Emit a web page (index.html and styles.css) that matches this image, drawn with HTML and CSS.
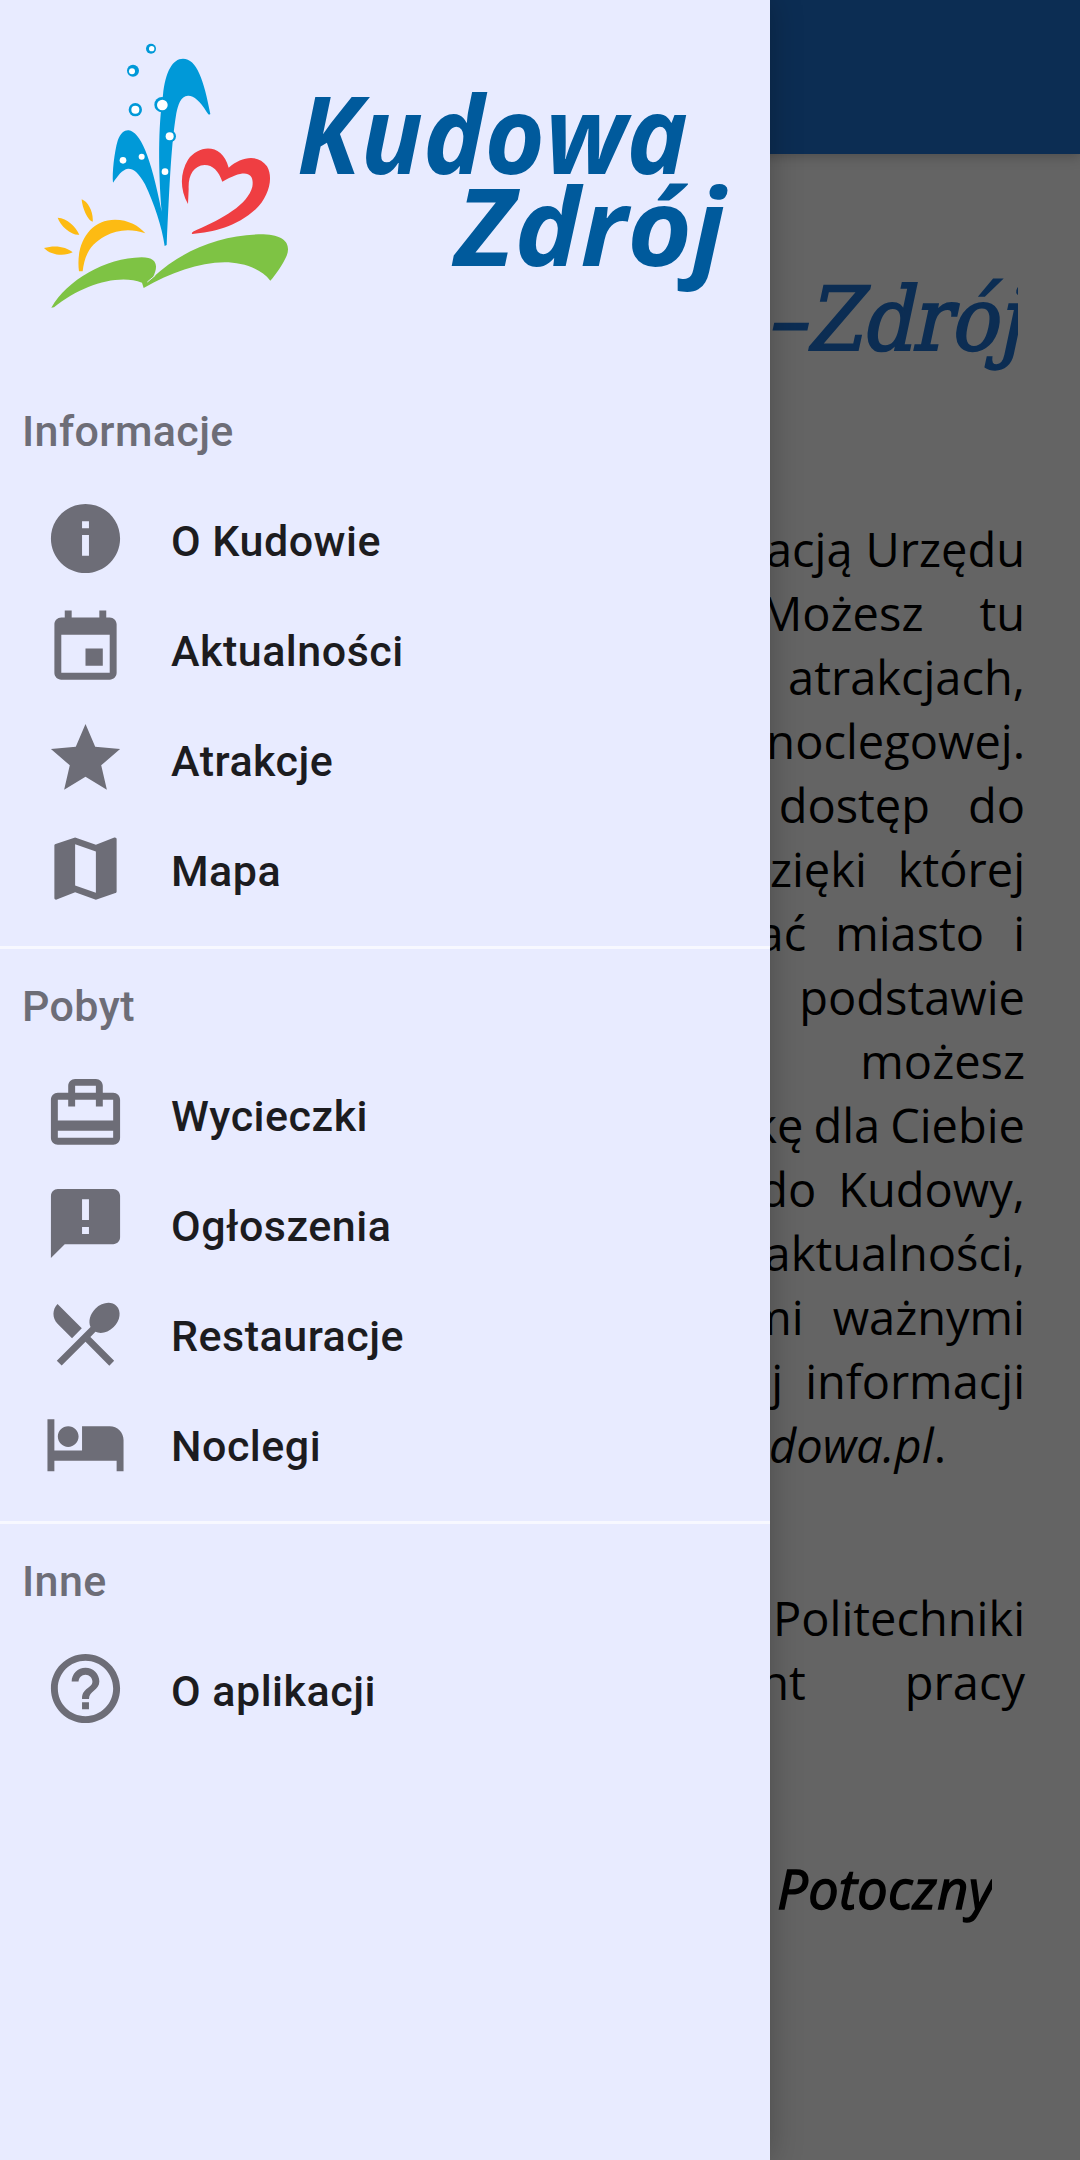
FILE: index.html
```html
<!DOCTYPE html>
<html lang="pl">
<head>
<meta charset="utf-8">
<title>Kudowa-Zdrój</title>
<link rel="stylesheet" href="styles.css">
</head>
<body>
<div class="screen">
  <main class="page">
    <header class="app-bar"></header>
    <h1 class="title"><span class="title-text">Kudowa–Zdrój</span></h1>
    <div class="text">
      <div class="line g11"><span>aplikacją</span><span>Urzędu</span></div>
      <div class="line g56"><span>Możesz</span><span>tu</span></div>
      <div class="line"><span>atrakcjach,</span></div>
      <div class="line"><span>noclegowej.</span></div>
      <div class="line g36"><span>dostęp</span><span>do</span></div>
      <div class="line g29"><span>dzięki</span><span>której</span></div>
      <div class="line g28"><span>poznać</span><span>miasto</span><span>i</span></div>
      <div class="line"><span>podstawie</span></div>
      <div class="line"><span>możesz</span></div>
      <div class="line g8"><span>wycieczkę</span><span>dla</span><span>Ciebie</span></div>
      <div class="line g20"><span>do</span><span>Kudowy,</span></div>
      <div class="line"><span>aktualności,</span></div>
      <div class="line g28"><span>innymi</span><span>ważnymi</span></div>
      <div class="line g20"><span>więcej</span><span>informacji</span></div>
      <div class="line last"><span><em>kudowa.pl</em>.</span></div>
    </div>
    <div class="text second">
      <div class="line"><span>Politechniki</span></div>
      <div class="line g98"><span>dokument</span><span>pracy</span></div>
    </div>
    <div class="author"><span class="author-name">Potoczny</span></div>
  </main>
  <div class="scrim"></div>
  <nav class="drawer">
    <svg class="logo" width="770" height="376" viewBox="0 0 770 376">
      <g transform="translate(30 30) scale(.33333)">
        <path fill="#0099d8" d="M404 648C396 590 372 520 345 463C325 425 308 415 294 416C276 419 263 438 249 458C246 430 253 365 263 332C272 308 284 300 296 301C330 306 362 375 395 545C385 420 384 290 399 195C406 125 428 86 459 86C500 86 522 150 541 252C537 256 535 253 530 246C511 213 490 196 474 197C452 198 444 225 439 250C424 340 419 455 410 645Z"/>
        <g fill="#0099d8">
          <circle cx="363" cy="56" r="15"/><circle cx="309" cy="122" r="18"/><circle cx="316" cy="239" r="20"/><circle cx="396" cy="224" r="23"/><circle cx="420" cy="319" r="18"/>
        </g>
        <g fill="#fff">
          <circle cx="365" cy="56" r="8"/><circle cx="306" cy="124" r="9"/><circle cx="316" cy="239" r="12"/><circle cx="397" cy="225" r="16"/><circle cx="419" cy="319" r="12"/><circle cx="279" cy="391" r="10"/><circle cx="335" cy="380" r="9"/><circle cx="405" cy="425" r="10"/>
        </g>
        <path fill="#ef3e42" d="M474 522C448 475 451 427 474 389C508 342 577 340 596 413C635 379 684 371 711 409C732 445 715 501 677 538C620 590 550 607 487 612C482 608 490 604 501 599C577 567 654 523 667 470C674 427 646 414 577 455C566 423 548 405 524 405C490 407 474 437 476 477Z"/>
        <g fill="#fdbb13">
          <path d="M147 724C136 640 180 569 255 569C295 569 328 588 346 610C302 594 261 599 226 618C181 642 164 674 158 724Z"/>
          <path d="M155 508C175 515 191 548 188 575C174 572 157 535 155 508ZM83 563C112 565 137 590 148 614C125 617 91 588 83 563ZM42 654C75 644 110 650 128 667C104 680 61 676 42 654Z"/>
        </g>
        <path fill="#7ec344" d="M64 833C112 751 224 684 335 682C385 682 384 711 369 742C460 657 580 613 700 613C770 615 782 647 770 677C757 705 739 732 721 752C691 713 633 697 584 697C506 698 421 728 341 774L336 758C266 730 154 765 72 832Z"/>
        <path fill="none" stroke="#e8ebff" stroke-width="3" d="M352 756L376 736"/>
      </g>
      <g class="logo-text">
        <text x="297" y="174" textLength="391" lengthAdjust="spacingAndGlyphs">Kudowa</text>
        <text x="455" y="266" textLength="270" lengthAdjust="spacingAndGlyphs">Zdrój</text>
      </g>
    </svg>
    <h2 class="heading">Informacje</h2>
    <a class="item"><svg class="icon" viewBox="0 0 24 24"><path d="M12 2C6.48 2 2 6.48 2 12s4.48 10 10 10 10-4.48 10-10S17.52 2 12 2zm1 15h-2v-6h2v6zm0-8h-2V7h2v2z"/></svg><span>O Kudowie</span></a>
    <a class="item"><svg class="icon" viewBox="0 0 24 24"><path d="M17 12h-5v5h5v-5zM16 1v2H8V1H6v2H5c-1.11 0-1.99.9-1.99 2L3 19c0 1.1.89 2 2 2h14c1.1 0 2-.9 2-2V5c0-1.1-.9-2-2-2h-1V1h-2zm3 18H5V8h14v11z"/></svg><span>Aktualności</span></a>
    <a class="item"><svg class="icon" viewBox="0 0 24 24"><path d="M12 17.27L18.18 21l-1.64-7.03L22 9.24l-7.19-.61L12 2 9.19 8.63 2 9.24l5.46 4.73L5.82 21z"/></svg><span>Atrakcje</span></a>
    <a class="item"><svg class="icon" viewBox="0 0 24 24"><path d="M20.5 3l-.16.03L15 5.1 9 3 3.36 4.9c-.21.07-.36.25-.36.48V20.5c0 .28.22.5.5.5l.16-.03L9 18.9l6 2.1 5.64-1.9c.21-.07.36-.25.36-.48V3.5c0-.28-.22-.5-.5-.5zM15 19l-6-2.11V5l6 2.11V19z"/></svg><span>Mapa</span></a>
    <hr class="divider">
    <h2 class="heading">Pobyt</h2>
    <a class="item"><svg class="icon" viewBox="0 0 24 24"><path d="M20 6h-3V4c0-1.11-.89-2-2-2H9c-1.11 0-2 .89-2 2v2H4c-1.11 0-2 .89-2 2v11c0 1.11.89 2 2 2h16c1.11 0 2-.89 2-2V8c0-1.11-.89-2-2-2zM9 4h6v2H9V4zm11 15H4v-2h16v2zm0-5H4V8h3v2h2V8h6v2h2V8h3v6z"/></svg><span>Wycieczki</span></a>
    <a class="item"><svg class="icon" viewBox="0 0 24 24"><path d="M20 2H4c-1.1 0-1.99.9-1.99 2L2 22l4-4h14c1.1 0 2-.9 2-2V4c0-1.1-.9-2-2-2zm-7 9h-2V5h2v6zm0 4h-2v-2h2v2z"/></svg><span>Ogłoszenia</span></a>
    <a class="item"><svg class="icon" viewBox="0 0 24 24"><path d="M8.1 13.34l2.83-2.83L3.91 3.5c-1.56 1.56-1.56 4.09 0 5.66l4.19 4.18zm6.78-1.81c1.53.71 3.68.21 5.27-1.38 1.91-1.91 2.28-4.65.81-6.12-1.46-1.46-4.2-1.1-6.12.81-1.59 1.59-2.09 3.74-1.38 5.27L3.7 19.87l1.41 1.41L12 14.41l6.88 6.88 1.41-1.41L13.41 13l1.47-1.47z"/></svg><span>Restauracje</span></a>
    <a class="item"><svg class="icon" viewBox="0 0 24 24"><path d="M7 13c1.66 0 3-1.34 3-3S8.66 7 7 7s-3 1.34-3 3 1.34 3 3 3zm12-6h-8v7H3V5H1v15h2v-3h18v3h2v-9c0-2.21-1.79-4-4-4z"/></svg><span>Noclegi</span></a>
    <hr class="divider">
    <h2 class="heading">Inne</h2>
    <a class="item"><svg class="icon" viewBox="0 0 24 24"><path d="M11 18h2v-2h-2v2zm1-16C6.48 2 2 6.48 2 12s4.48 10 10 10 10-4.48 10-10S17.52 2 12 2zm0 18c-4.41 0-8-3.59-8-8s3.59-8 8-8 8 3.59 8 8-3.59 8-8 8zm0-14c-2.21 0-4 1.79-4 4h2c0-1.1.9-2 2-2s2 .9 2 2c0 2-3 1.75-3 5h2c0-2.25 3-2.5 3-5 0-2.21-1.79-4-4-4z"/></svg><span>O aplikacji</span></a>
  </nav>
</div>
</body>
</html>
```
FILE: styles.css
```css
* { box-sizing: border-box; }
body { margin: 0; }
.screen {
  display: grid;
  width: 1080px;
  height: 2160px;
  overflow: hidden;
  font-family: Roboto, sans-serif;
}
.page, .scrim, .drawer { grid-area: 1 / 1; }
.page {
  display: flex;
  flex-direction: column;
  background: #f9f9f9;
  color: #000;
}
.app-bar {
  flex: none;
  height: 154px;
  background: #1e72cf;
  box-shadow: 0 2px 12px rgba(0, 0, 0, .25);
}
.title {
  margin: 96px 62px 0 0;
  height: 140px;
  overflow: hidden;
  text-align: right;
  font: 400 88px/140px "DejaVu Serif Condensed", "DejaVu Serif", serif;
  color: #1e72cf;
}
.title-text {
  display: inline-block;
  -webkit-text-stroke: 2.2px #1e72cf;
  transform: translate(10px, 0) skewX(-12deg);
}
.text {
  margin: 127px 55px 0 0;
  font: 400 47px/64px "Open Sans", sans-serif;
}
.text.second { margin-top: 109px; }
.line {
  display: flex;
  justify-content: flex-end;
  white-space: nowrap;
}
.last { padding-right: 79px; }
.g8 { gap: 10px; }
.g11 { gap: 13px; }
.g20 { gap: 22px; }
.g28 { gap: 29px; }
.g29 { gap: 31px; }
.g36 { gap: 38px; }
.g56 { gap: 56px; }
.g98 { gap: 99px; }
.author {
  margin: 134px 88px 0 0;
  overflow: hidden;
  text-align: right;
  font: italic 400 54px/80px "Open Sans", sans-serif;
}
.author-name {
  display: inline-block;
  letter-spacing: .4px;
  -webkit-text-stroke: 1.5px #000;
  transform: translateX(2px);
}
.scrim {
  z-index: 1;
  background: rgba(0, 0, 0, .6);
}
.drawer {
  z-index: 2;
  width: 770px;
  background: #e8ebff;
  box-shadow: 0 0 30px rgba(0, 0, 0, .25);
}
.logo { display: block; }
.logo-text {
  font: italic 700 107px "Open Sans", sans-serif;
  fill: #005a9c;
}
.heading {
  margin: 0;
  padding-left: 22px;
  font-size: 43px;
  font-weight: 500;
  line-height: 110px;
  letter-spacing: .4px;
  color: #6d6d77;
}
.item {
  display: flex;
  align-items: center;
  gap: 44px;
  height: 110px;
  padding-left: 44px;
  font-size: 43px;
  font-weight: 500;
  letter-spacing: .5px;
  color: #1c1c1f;
}
.icon {
  width: 83px;
  height: 83px;
  margin-bottom: 5px;
  fill: #6d6d77;
}
.divider {
  height: 3px;
  margin: 20px 0 2px;
  border: 0;
  background: #f7f8ff;
}
```
